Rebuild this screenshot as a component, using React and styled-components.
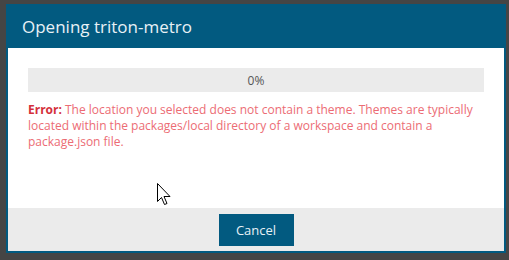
import React from "react";
import styled, { createGlobalStyle } from "styled-components";

const Global = createGlobalStyle`
  html, body { margin: 0; padding: 0; background: #454545; }
  body { font-family: "Open Sans", "Noto Sans", sans-serif; }
`;

const Screen = styled.div`
  width: 509px;
  height: 260px;
  background: #454545;
  padding: 4px 3px 7px 6px;
  box-sizing: border-box;
  position: relative;
`;

const Dialog = styled.div`
  width: 500px;
  height: 249px;
  box-sizing: border-box;
  border: 2px solid #025a80;
  border-top: none;
  display: flex;
  flex-direction: column;
  background: #fff;
`;

const Header = styled.div`
  height: 44px;
  margin: 0 -2px;
  padding-left: 16px;
  background: #025a80;
  color: #e8f1f6;
  font-size: 17px;
  display: flex;
  align-items: center;
`;

const Body = styled.div`
  flex: 1;
  padding: 20px;
  display: flex;
  flex-direction: column;
`;

const Progress = styled.div`
  height: 24px;
  background: #ebebeb;
  color: #555;
  font-size: 12px;
  display: flex;
  align-items: center;
  justify-content: center;
`;

const ErrorText = styled.p`
  margin: 10px 0 0;
  font-size: 12px;
  line-height: 16px;
  color: #ec6c74;
  font-weight: 400;
`;

const ErrorLabel = styled.span`
  color: #d4303a;
  font-weight: 700;
  margin-right: 3px;
`;

const Footer = styled.div`
  height: 43px;
  background: #ebebeb;
  display: flex;
  justify-content: center;
  align-items: flex-start;
  padding-top: 6px;
  box-sizing: border-box;
`;

const Button = styled.button`
  width: 75px;
  height: 32px;
  border: none;
  background: #025a80;
  color: #e8f1f6;
  font-family: "Open Sans", "Noto Sans", sans-serif;
  font-size: 13px;
  padding: 0;
`;

const Cursor = styled.svg`
  position: absolute;
  left: 156px;
  top: 182px;
`;

export default function App() {
  return (
    <>
      <Global />
      <Screen>
        <Dialog>
          <Header>Opening triton-metro</Header>
          <Body>
            <Progress>0%</Progress>
            <ErrorText>
              <ErrorLabel>Error:</ErrorLabel>The location you selected does not contain a theme. Themes are typically
              located within the packages/local directory of a workspace and contain a package.json file.
            </ErrorText>
          </Body>
          <Footer>
            <Button>Cancel</Button>
          </Footer>
        </Dialog>
        <Cursor width="15" height="25" viewBox="0 0 15 25">
          <path
            d="M1.5 1.5 L1.5 19.5 L5.5 15.5 L8.5 22.5 L11 21.5 L8 14.5 L14 14.5 Z"
            fill="#fff"
            stroke="#000"
            strokeWidth="1"
            strokeLinejoin="miter"
          />
        </Cursor>
      </Screen>
    </>
  );
}
